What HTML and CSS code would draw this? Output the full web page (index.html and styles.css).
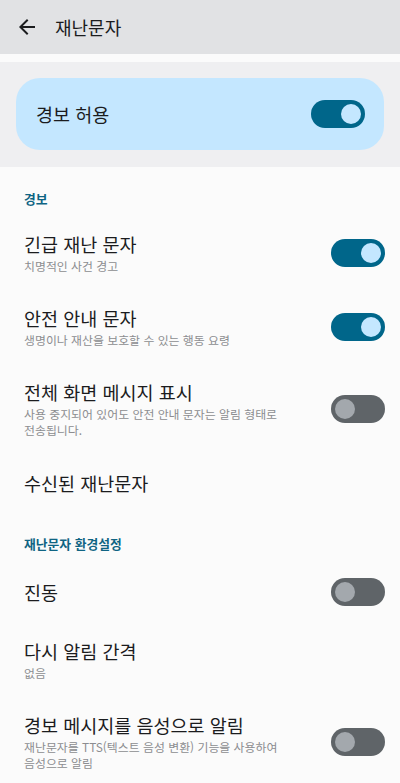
FILE: index.html
```html
<!DOCTYPE html>
<html lang="ko">
<head>
    <meta charset="UTF-8">
    <meta name="viewport" content="width=device-width, initial-scale=1.0">
    <title>재난문자</title>
    <link rel="stylesheet" href="styles.css">
</head>
<body>
    <div class="appbar">
        <svg class="back" width="24" height="24" viewBox="0 0 24 24">
            <path d="M20 11H7.83l5.59-5.59L12 4l-8 8 8 8 1.41-1.41L7.83 13H20v-2z" fill="#1b1c1e"/>
        </svg>
        <div class="appbar-title">재난문자</div>
    </div>

    <div class="main-panel">
        <div class="main-card">
            <div class="main-label">경보 허용</div>
            <div class="switch on"><span class="thumb"></span></div>
        </div>
    </div>

    <div class="list">
        <div class="section">경보</div>
        <div class="row">
            <div class="text">
                <div class="title">긴급 재난 문자</div>
                <div class="summary">치명적인 사건 경고</div>
            </div>
            <div class="switch on"><span class="thumb"></span></div>
        </div>
        <div class="row">
            <div class="text">
                <div class="title">안전 안내 문자</div>
                <div class="summary">생명이나 재산을 보호할 수 있는 행동 요령</div>
            </div>
            <div class="switch on"><span class="thumb"></span></div>
        </div>
        <div class="row">
            <div class="text">
                <div class="title">전체 화면 메시지 표시</div>
                <div class="summary">사용 중지되어 있어도 안전 안내 문자는 알림 형태로 전송됩니다.</div>
            </div>
            <div class="switch"><span class="thumb"></span></div>
        </div>
        <div class="row single">
            <div class="text">
                <div class="title">수신된 재난문자</div>
            </div>
        </div>

        <div class="section">재난문자 환경설정</div>
        <div class="row single">
            <div class="text">
                <div class="title">진동</div>
            </div>
            <div class="switch"><span class="thumb"></span></div>
        </div>
        <div class="row">
            <div class="text">
                <div class="title">다시 알림 간격</div>
                <div class="summary">없음</div>
            </div>
        </div>
        <div class="row">
            <div class="text">
                <div class="title">경보 메시지를 음성으로 알림</div>
                <div class="summary">재난문자를 TTS(텍스트 음성 변환) 기능을 사용하여 음성으로 알림</div>
            </div>
            <div class="switch"><span class="thumb"></span></div>
        </div>
    </div>
</body>
</html>
```

FILE: styles.css
```css
* {
    margin: 0;
    padding: 0;
    box-sizing: border-box;
    font-family: "Noto Sans CJK KR", Roboto, sans-serif;
}
body {
    width: 400px;
    height: 783px;
    overflow: hidden;
    background: #fbfbfb;
    color: #1b1c1e;
    word-break: keep-all;
}
.appbar {
    display: flex;
    align-items: center;
    height: 54px;
    padding-left: 15px;
    background: #e1e2e4;
}
.back {
    display: block;
}
.appbar-title {
    margin-left: 16px;
    font-size: 18px;
    line-height: 24px;
}
.main-panel {
    margin-top: 8px;
    padding: 16px 16px 17px;
    background: #efeff1;
}
.main-card {
    display: flex;
    align-items: center;
    justify-content: space-between;
    height: 72px;
    padding: 0 19px 0 20px;
    border-radius: 24px;
    background: #c4e7ff;
}
.main-label {
    font-size: 18.5px;
    line-height: 24px;
}
.switch {
    display: flex;
    align-items: center;
    flex-shrink: 0;
    width: 54px;
    height: 28px;
    padding: 0 4px;
    border-radius: 14px;
    background: #5f6468;
}
.switch .thumb {
    width: 20px;
    height: 20px;
    border-radius: 50%;
    background: #a3a8ad;
}
.switch.on {
    justify-content: flex-end;
    background: #00668a;
}
.switch.on .thumb {
    background: #c4e7ff;
}
.section {
    padding: 24px 24px 9px;
    font-size: 12.8px;
    line-height: 16px;
    font-weight: bold;
    color: #0f6483;
}
.row {
    display: flex;
    align-items: center;
    padding: 16px 15px 16px 24px;
}
.row.single {
    padding-top: 17px;
    padding-bottom: 17px;
}
.text {
    flex: 1;
    margin-right: 26px;
}
.title {
    font-size: 18.5px;
    line-height: 24px;
}
.summary {
    margin-top: 2px;
    font-size: 11.9px;
    line-height: 16px;
    color: #8c8d90;
}
```
